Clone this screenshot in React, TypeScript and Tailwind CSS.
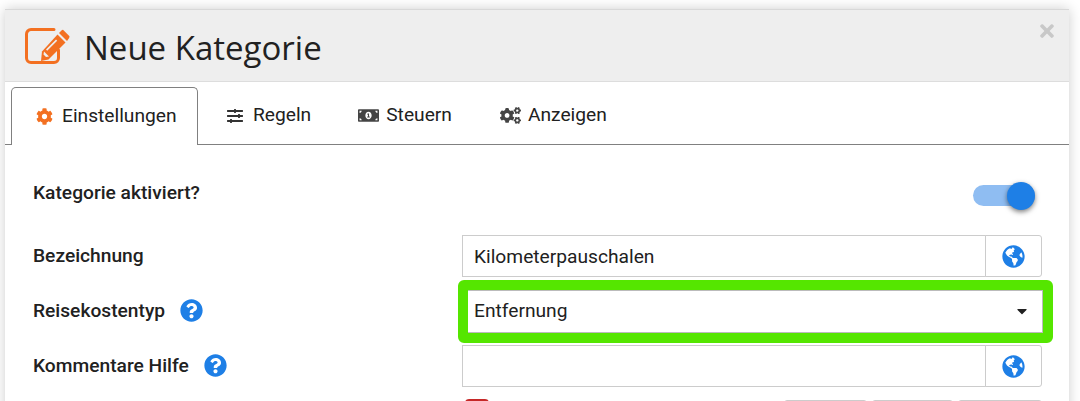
import { ReactNode } from "react";
import { FaCog, FaCogs, FaGlobeAmericas, FaMoneyBillAlt, FaQuestionCircle, FaSlidersH, FaCaretDown, FaTimes } from "react-icons/fa";

// Outlined box with a solid pencil, the FA icon has too heavy a box
const EditIcon = () => (
  <svg viewBox="0 0 45 36" className="w-[45px] h-[36px] shrink-0 text-[#f37021]" fill="currentColor">
    <path d="M29 1.5H6a4.5 4.5 0 0 0-4.5 4.5v24A4.5 4.5 0 0 0 6 34.5h23a4.5 4.5 0 0 0 4.5-4.5v-8" fill="none" stroke="currentColor" strokeWidth="3" strokeLinecap="round" />
    <path d="M32.5 6.5l8 8L23.5 31.5 16 33l1-9.5z" />
    <path d="M34 5l3-3 1-.3 6.5 6.5-.3 1.8-2.2 3z" />
    <path d="M18.5 26.5l2.5 2.5 3-.5-5-5z" fill="#eeeeee" />
    <path d="M31 11.5l1.2 1.2-10 10-1.2-1.2z" fill="#eeeeee" />
  </svg>
);

const GlobeButton = () => (
  <button type="button" className="w-[57px] h-[42px] -ml-px flex items-center justify-center bg-white border border-[#ccc] rounded-r-[3px] text-[#1e7fe6]">
    <FaGlobeAmericas className="w-[23px] h-[23px]" />
  </button>
);

const Help = () => <FaQuestionCircle className="w-[23px] h-[23px] text-[#1e7fe6] ml-[15px]" />;

const Row = ({ label, help, children }: { label: string; help?: boolean; children: ReactNode }) => (
  <div className="flex items-center h-[42px] mb-[13px]">
    <div className="w-[429px] flex items-center text-[19.2px] font-medium text-[#212121]">
      {label}
      {help && <Help />}
    </div>
    {children}
  </div>
);

export default function App() {
  return (
    <div className="h-[401px] overflow-hidden bg-white pt-[9px] pl-[5px] pr-[11px] font-['Roboto',sans-serif]">
      <div className="w-[1064px] border-t border-[#d8d8d8] shadow-[0_0_12px_rgba(0,0,0,0.2)] bg-white h-[500px]">
        {/* Header */}
        <header className="relative h-[72px] bg-[#eeeeee] border-b border-[#dddddd] flex items-center pl-5">
          <EditIcon />
          <h1 className="ml-[14px] mt-[3px] text-[33px] leading-none text-[#212121] font-['Open_Sans',sans-serif]">Neue Kategorie</h1>
          <FaTimes className="absolute top-[11px] right-[15px] w-[14px] h-[20px] text-[#c8c8c8]" />
        </header>

        {/* Tabs */}
        <nav className="h-[63px] pt-[5px] pl-1.5 border-b border-[#808080] flex text-[19.2px] text-[#212121]">
          <div className="h-[58px] w-[187px] pl-[24px] flex items-center gap-[9px] bg-white border border-b-0 border-[#808080] rounded-t-[5px]">
            <FaCog className="w-[17px] h-[17px] text-[#f37021]" />
            Einstellungen
          </div>
          <div className="h-[57px] ml-[28px] flex items-center gap-[9px]">
            <FaSlidersH className="w-[18px] h-[16px] text-[#333]" />
            Regeln
          </div>
          <div className="h-[57px] ml-[47px] flex items-center gap-[7px]">
            <FaMoneyBillAlt className="w-[21px] h-[17px] text-[#444]" />
            Steuern
          </div>
          <div className="h-[57px] ml-[48px] flex items-center gap-[7px]">
            <FaCogs className="w-[21px] h-[17px] text-[#444]" />
            Anzeigen
          </div>
        </nav>

        {/* Form */}
        <div className="pt-[30px] pl-7 pr-[27px]">
          <div className="flex items-center justify-between h-[37px] mb-[23px]">
            <span className="text-[19.2px] font-medium text-[#212121]">Kategorie aktiviert?</span>
            <div className="relative w-[62px] h-[21px] mr-[7px] mt-[3px] rounded-full bg-[#8fbdf2]">
              <div className="absolute -top-[3px] right-0 w-7 h-7 rounded-full bg-[#1e7fe6] shadow-[0_2px_5px_rgba(0,0,0,0.5)]" />
            </div>
          </div>

          <Row label="Bezeichnung">
            <input readOnly value="Kilometerpauschalen" className="w-[524px] h-[42px] px-[11px] border border-[#ccc] text-[19.2px] text-[#212121] outline-none" />
            <GlobeButton />
          </Row>

          <Row label="Reisekostentyp" help>
            <div className="-ml-1 -mr-[11px] w-[595px] h-[63px] border-[10px] border-[#55e600] rounded-[6px] shrink-0">
              <div className="h-full flex items-center justify-between pl-[6px] pr-[15px] bg-white border-t border-b border-r border-[#bbb] text-[19.2px] text-[#212121]">
                Entfernung
                <FaCaretDown className="w-[10px] h-[16px] text-[#212121]" />
              </div>
            </div>
          </Row>

          <div className="flex items-center h-[42px] mb-[12px]">
            <div className="w-[429px] flex items-center text-[19.2px] font-medium text-[#212121]">
              Kommentare Hilfe
              <Help />
            </div>
            <input readOnly value="" className="w-[524px] h-[42px] px-[11px] border border-[#ccc] text-[19.2px] outline-none" />
            <GlobeButton />
          </div>

          <div className="flex">
            <div className="ml-[432px] w-[24px] h-[10px] rounded-[4px] bg-[#c62828]" />
            <div className="ml-[295px] mt-px w-[83px] h-[10px] border border-[#ccc] rounded-t-[3px]" />
            <div className="ml-[5px] mt-px w-[82px] h-[10px] border border-[#ccc] rounded-t-[3px]" />
            <div className="ml-[5px] mt-px w-[84px] h-[10px] border border-[#ccc] rounded-t-[3px]" />
          </div>
        </div>
      </div>
    </div>
  );
}
